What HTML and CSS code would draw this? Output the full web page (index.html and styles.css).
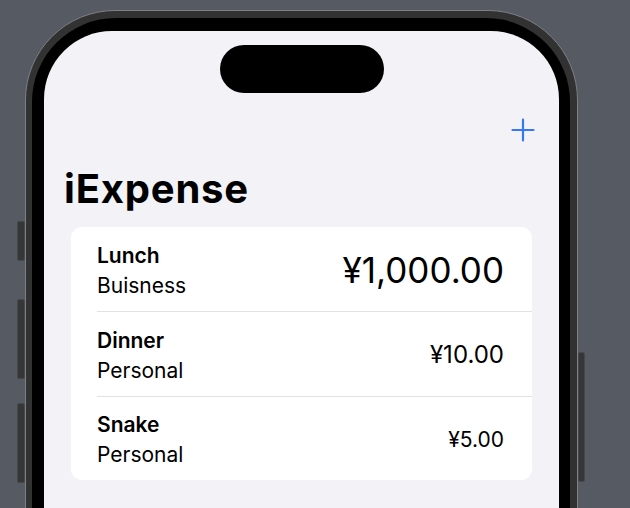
FILE: index.html
```html
<!DOCTYPE html>
<html lang="en">
<head>
<meta charset="utf-8">
<title>iExpense</title>
<link rel="stylesheet" href="styles.css">
</head>
<body>
<div class="stage">
  <div class="device">
    <span class="btn btn-action"></span>
    <span class="btn btn-vol-up"></span>
    <span class="btn btn-vol-down"></span>
    <span class="btn btn-power"></span>
    <div class="bezel">
      <div class="screen">
        <div class="island"></div>
        <div class="toolbar">
          <svg class="plus" width="24" height="24" viewBox="0 0 24 24" aria-label="Add">
            <path d="M12 1.5V22.5M1.5 12H22.5" fill="none" stroke="#3478f6" stroke-width="2.2" stroke-linecap="round"/>
          </svg>
        </div>
        <h1 class="title">iExpense</h1>
        <div class="card">
          <div class="row">
            <div class="row-inner">
              <div class="labels">
                <div class="name">Lunch</div>
                <div class="type">Buisness</div>
              </div>
              <div class="amount amount-lg">¥1,000.00</div>
            </div>
          </div>
          <div class="row">
            <div class="row-inner">
              <div class="labels">
                <div class="name">Dinner</div>
                <div class="type">Personal</div>
              </div>
              <div class="amount amount-md">¥10.00</div>
            </div>
          </div>
          <div class="row">
            <div class="row-inner">
              <div class="labels">
                <div class="name">Snake</div>
                <div class="type">Personal</div>
              </div>
              <div class="amount amount-sm">¥5.00</div>
            </div>
          </div>
        </div>
      </div>
    </div>
  </div>
</div>
</body>
</html>
```

FILE: styles.css
```css
html, body {
  margin: 0;
  padding: 0;
}
body {
  background: #565b63;
  width: 630px;
  height: 508px;
  overflow: hidden;
  font-family: "Inter", "Noto Sans", sans-serif;
  color: #000;
}
.stage {
  padding: 10px 0 0 25px;
}
.device {
  position: relative;
  width: 553px;
  height: 620px;
  border: 1px solid #7c7f84;
  border-radius: 90px;
  background: #323232;
  padding: 7px 7px 0 6px;
  box-sizing: border-box;
}
.btn {
  position: absolute;
  background: #363636;
  border: 1px solid #45484d;
  border-radius: 2px;
}
.btn-action { left: -9px; top: 210px; width: 6px; height: 38px; }
.btn-vol-up { left: -9px; top: 288px; width: 6px; height: 78px; }
.btn-vol-down { left: -9px; top: 392px; width: 6px; height: 78px; }
.btn-power { right: -8px; top: 341px; width: 5px; height: 128px; }
.bezel {
  background: #000;
  border-radius: 84px;
  padding: 13px 12px 0 12px;
  height: 100%;
  box-sizing: border-box;
}
.screen {
  background: #f2f2f7;
  border-radius: 68px 68px 0 0;
  width: 515px;
  height: 100%;
  padding-top: 14px;
  box-sizing: border-box;
}
.island {
  width: 164px;
  height: 48px;
  margin: 0 auto;
  background: #000;
  border-radius: 24px;
}
.toolbar {
  display: flex;
  justify-content: flex-end;
  margin-top: 25px;
  padding-right: 24px;
  height: 24px;
}
.plus {
  display: block;
}
.title {
  margin: 25px 0 0 0;
  padding-left: 20px;
  font-size: 40px;
  line-height: 44px;
  font-weight: 700;
  letter-spacing: 0.8px;
}
.card {
  margin: 16px 27px 0 27px;
  background: #fff;
  border-radius: 11px;
  overflow: hidden;
}
.row {
  padding-left: 26px;
}
.row-inner {
  display: flex;
  align-items: center;
  justify-content: space-between;
  height: 85px;
  padding-top: 3px;
  padding-right: 28px;
  box-sizing: border-box;
  border-bottom: 1px solid #e2e2e6;
}
.row:last-child .row-inner {
  height: 83px;
  border-bottom: none;
}
.labels {
  display: flex;
  flex-direction: column;
}
.name {
  font-size: 21px;
  line-height: 30px;
  font-weight: 600;
}
.type {
  font-size: 21px;
  line-height: 30px;
  font-weight: 400;
}
.amount {
  font-weight: 400;
  margin-top: -2px;
}
.amount-lg {
  font-size: 35px;
}
.amount-md {
  font-size: 24px;
}
.amount-sm {
  font-size: 21px;
}
```
